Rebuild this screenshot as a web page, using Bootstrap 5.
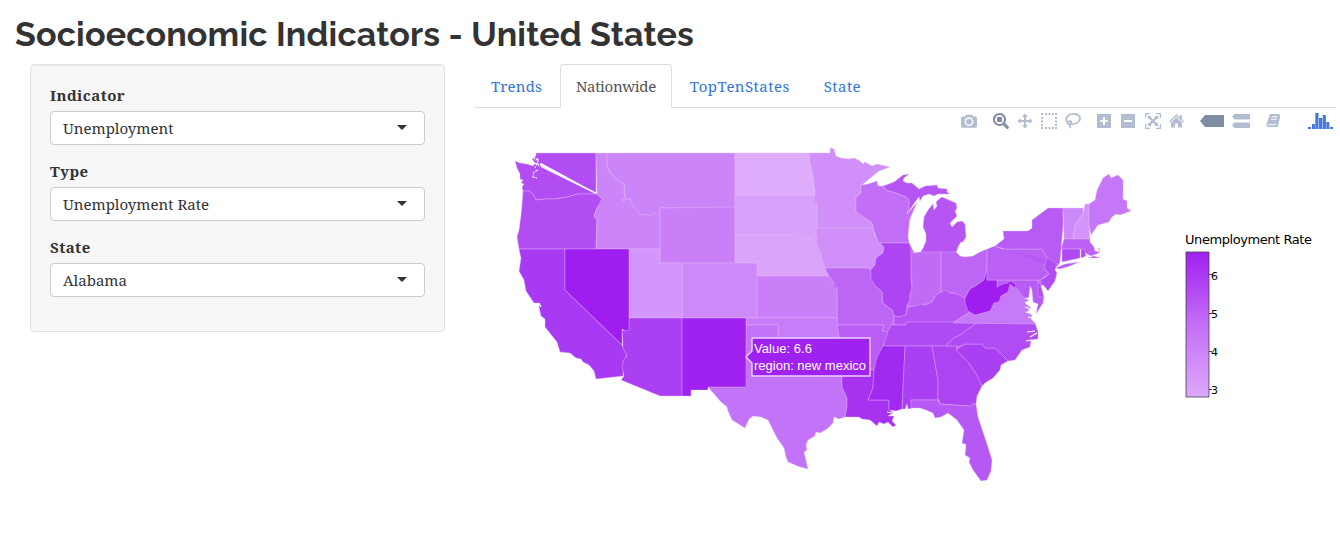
<!DOCTYPE html>
<html lang="en">
<head>
<meta charset="utf-8">
<meta name="viewport" content="width=device-width, initial-scale=1">
<title>Socioeconomic Indicators - United States</title>
<link href="https://cdn.jsdelivr.net/npm/bootstrap@5.3.0/dist/css/bootstrap.min.css" rel="stylesheet">
<style>
body{font-family:"Droid Serif","Noto Serif","DejaVu Serif Condensed","DejaVu Serif",serif;font-stretch:condensed;font-size:15px;line-height:22px;color:#333;background:#fff;overflow:hidden}
h1{font-family:Raleway,Lato,sans-serif;font-weight:700;font-size:34px;line-height:38px;letter-spacing:.16px;margin:0;padding:15px 0 0 15px;height:64px;white-space:nowrap}
.side-col{width:415px;margin-left:30px;margin-right:30px}
.side-panel{height:268px;background:#f7f7f7;border:1px solid #e3e3e3;border-radius:4px;padding:19px;box-shadow:inset 0 1px 1px rgba(0,0,0,.05)}
.field{margin-bottom:15px}
.field label{display:block;font-weight:700;letter-spacing:1px;height:22px;margin-bottom:5px}
.picker{height:34px;padding:0 17px 0 12px;background:#fff;border:1px solid #ccc;border-radius:4px;color:#333;font-size:15px;line-height:22px}
.picker::after{border-top:5px solid #333;border-left:5px solid transparent;border-right:5px solid transparent;margin:0 0 2px}
.main-col{width:861px}
.nav-tabs{height:44px;border-color:#ddd}
.nav-tabs .nav-link{color:#3475dc;padding:10px 15px;margin-right:2px;line-height:22px;height:44px;border-radius:4px 4px 0 0;letter-spacing:.17px}
.nav-tabs .nav-link.active{color:#555;border-color:#ddd #ddd #fff;letter-spacing:-.34px}
.nav-tabs .wide-name{letter-spacing:.45px}
.field label{letter-spacing:.45px}
.tools{height:22px;padding:5px 2px 0 0;color:#b3bdd1}
.tools svg{height:16px;width:16px;margin-right:8px;fill:currentColor;flex:none}
.tools .on{color:#808ca4}
.tools .sep{margin-right:16px}
.map{display:block;width:865px;height:400px}
.states path{stroke:#e5bdfb;stroke-opacity:.55;stroke-width:.7;stroke-linejoin:round}
.legend-text{font-family:Verdana,"DejaVu Sans",sans-serif;font-stretch:normal;font-size:13px;fill:#000}
.tip-text{font-family:"Liberation Sans",Arial,sans-serif;font-size:13px;fill:#fff}
</style>
</head>
<body>
<h1>Socioeconomic Indicators - United States</h1>
<div class="d-flex">
  <aside class="side-col flex-shrink-0">
    <form class="side-panel">
      <div class="field"><label>Indicator</label><button type="button" class="btn picker dropdown-toggle w-100 d-flex align-items-center justify-content-between">Unemployment</button></div>
      <div class="field"><label>Type</label><button type="button" class="btn picker dropdown-toggle w-100 d-flex align-items-center justify-content-between">Unemployment Rate</button></div>
      <div class="field"><label>State</label><button type="button" class="btn picker dropdown-toggle w-100 d-flex align-items-center justify-content-between">Alabama</button></div>
    </form>
  </aside>
  <main class="main-col flex-shrink-0">
    <ul class="nav nav-tabs flex-nowrap">
      <li class="nav-item"><a class="nav-link" href="#">Trends</a></li>
      <li class="nav-item"><a class="nav-link active" href="#">Nationwide</a></li>
      <li class="nav-item"><a class="nav-link wide-name" href="#">TopTenStates</a></li>
      <li class="nav-item"><a class="nav-link wide-name" href="#">State</a></li>
    </ul>
    <div class="tools d-flex justify-content-end">
      <svg class="sep" viewBox="0 0 16 16"><path fill-rule="evenodd" d="M0 5q0-1.600 1.600-1.600H4l1-1.600h6l1 1.600h2.400Q16 3.400 16 5v8q0 1.700-1.600 1.700H1.600Q0 14.700 0 13ZM8 4.300a4.400 4.400 0 1 0 0 8.800 4.400 4.400 0 0 0 0-8.800Zm0 1.500a2.900 2.900 0 1 1 0 5.800 2.900 2.900 0 0 1 0-5.800Z"/><circle cx="8" cy="8.700" r="1.500"/></svg>
      <svg class="on" viewBox="0 0 16 16"><path fill-rule="evenodd" d="M6.500 0a6.500 6.500 0 1 0 3.400 12l3.300 3.500q1.200 1 2.200 0 1-1.200 0-2.200L12 10A6.500 6.500 0 0 0 6.500 0Zm0 2a4.500 4.500 0 1 1 0 9 4.500 4.500 0 0 1 0-9Z"/><path d="M4 4h5v5H4z"/></svg>
      <svg viewBox="0 0 16 16"><path d="M8 .500 11 4H9v3h3.500V5.200L15.700 8l-3.200 2.800V9H9v3.200h2L8 15.500 5 12.200h2V9H3.500v1.800L.3 8l3.200-2.800V7H7V4H5Z"/></svg>
      <svg viewBox="0 0 16 16"><path d="M0 0h2v2H0zM4 0h2v2H4zM7.500 0h2v2h-2zM11 0h2v2h-2zM14 0h2v2h-2zM0 4h2v2H0zM0 7.500h2v2H0zM0 11h2v2H0zM0 14h2v2H0zM4 14h2v2H4zM7.500 14h2v2h-2zM11 14h2v2h-2zM14 14h2v2h-2zM14 4h2v2h-2zM14 7.500h2v2h-2zM14 11h2v2h-2z"/></svg>
      <svg class="sep" viewBox="0 0 16 16"><path fill="none" stroke="currentColor" stroke-width="1.700" d="M3.300 10.800C.5 8.500.3 4.700 3.200 2.500 6.500 0 12 .500 14.300 3.300c2.300 3.500-1.500 7.200-6 7.700-1.500.2-2.500 0-3.600-.4m0 0C7 9.800 6.700 8 4.800 8.100 2.500 8.300 2.300 11 4.300 12c1.200.9 1.400 1.900.7 3"/></svg>
      <svg viewBox="0 0 16 16"><path fill-rule="evenodd" d="M0 1h14v14H0ZM6 4v3H3v2h3v3h2V9h3V7H8V4Z"/></svg>
      <svg viewBox="0 0 16 16"><path fill-rule="evenodd" d="M0 1h14v14H0ZM3 7v2h8V7Z"/></svg>
      <svg viewBox="0 0 16 16"><path d="M0 0h5v1.300H1.300V5H0ZM11 0h5v5h-1.300V1.300H11ZM0 11h1.300v3.700H5V16H0ZM14.700 11H16v5h-5v-1.300h3.700ZM3 3h3.500L5.700 4 8 6.500 10.300 4l-.8-1H13v3.500l-1-.8L9.500 8l2.500 2.300 1-.8V13H9.500l.8-1L8 9.500 5.700 12l.8 1H3V9.500l1 .8L6.500 8 4 5.700l-1 .8Z"/></svg>
      <svg viewBox="0 0 16 16" style="margin-right:15px"><path d="M7.500 1.200 11 4.500V2.200h2v4.200l2.300 2.200-1 1L7.500 3.300.8 9.600-.1 8.600ZM2 9.500l5.500-5.200L13 9.500V14.500H9v-4H6v4H2Z"/></svg>
      <svg class="on" viewBox="0 0 24 16" style="width:24px"><path d="M0 8 5 2h19v12H5Z"/></svg>
      <svg class="sep" viewBox="0 0 18 16" style="width:18px"><path d="M0 3.500 2.500 1H18v5.500H2.500ZM0 12l2.500-2.500H18V15H2.500Z"/></svg>
      <svg viewBox="0 0 16 16" style="margin-right:26px"><path fill-rule="evenodd" d="M4 1h9l1.300 2-2.500 11H1.500L.3 12Zm1.700 2.200-.3 1h6L11.700 3.200ZM5 5.700l-.3 1h6L11 5.700ZM2 11.300v1h8.300l.3-1Z"/></svg>
      <svg viewBox="0 0 26 16" style="width:26px;margin-right:0;color:#447adb"><path d="M0 14h3v2H0zM4 11h3v5H4zM7.300 0h3.200v16H7.300zM11 5h3.200v11H11zM14.700 2h3.200v14h-3.200zM18.300 9h3v7h-3zM22 14h3v2h-3z"/></svg>
    </div>
    <svg class="map" viewBox="475 130 865 400">
      <defs><linearGradient id="rate" x2="0" y2="1"><stop stop-color="#a020f0"/><stop offset=".5" stop-color="#c46ff7"/><stop offset="1" stop-color="#dda8fa"/></linearGradient></defs>
      <path fill="#bb65f5" d="M600 200H855L870 240H908L915 255H950L962 265 985 255 1040 260 1045 285 1000 290 1020 320 1020 340 990 370 970 400 850 400 700 370 650 350Z"/>
      <g class="states">
        <path fill="#b24df3" d="M515 161 520 163 527 164 533 166 535 163 532 159 536 156 536 153H596V193L541 163 541 167 596 194H578L567 197 561 198 555 199 545 199 536 200 533 194 529 191H523L522 187 524 184 521 183 523 180 520 179V174L517 168Z"/>
        <path fill="#b24df3" d="M523 191H529L533 194 536 200 545 199 555 199 561 198 567 197 578 194H597L602 199 601 203 597 208 594 216 597 220 596 249H519L518 243 517 237 519 230 521 215 522 204Z"/>
        <path fill="#cc85f9" d="M596 153H607V167L612 175 618 180 625 185 624 192 625 196 623 201 627 199 630 199 633 206 637 210 640 215 645 214 649 215 656 213 660 214V249H596L597 220 594 216 597 208 602 199 597 194Z"/>
        <path fill="#cc85f9" d="M607 153H735V208H660V214L657 211 654 214 649 215 645 214 640 215 637 210 633 206 630 199 627 199 623 201 625 196 624 192 625 185 618 180 612 175 607 167Z"/>
        <path fill="#ca7ff8" d="M660 208 735 207V263H660Z"/>
        <path fill="#dfabfb" d="M735 153H809L810 164 813 176 814 189 815 195H735Z"/>
        <path fill="#d9a1fa" d="M735 195H815L813 200 817 204V228L816 232 817 238 816 242 811 238 805 237 800 238 795 235H735Z"/>
        <path fill="#dba4fa" d="M735 235H795L800 238 805 237 811 238 816 242 821 253 823 262 826 270 829 276H757V263H735Z"/>
        <path fill="#d08ff9" d="M809 153H830V148L834 149 836 156 841 158 849 159 854 158 860 161 863 164 865 162 872 166 877 164 890 167 879 171 863 184 861 185V193L856 197V211L862 216 872 223 873 228H817V204L813 200 815 195 813 176 810 164Z"/>
        <path fill="#d08ff9" d="M817 228H873L875 236 880 243 884 247 883 253 876 258 875 265 871 270 868 268H825L823 260 821 253 816 242 817 238 816 232Z"/>
        <path fill="#c26ef6" d="M861 185 868 184 877 181 878 186 883 186 886 190 896 193 906 197 909 200V207L907 214 913 207 917 203 912 214 910 219 909 226 908 236 909 243H879L876 237 875 234 873 228 872 223 862 216 856 211V197L861 193Z"/>
        <path fill="#b755f4" d="M883 186 894 182 903 175 909 174 904 178 903 181 907 183 912 183 919 189 925 186 937 185 938 188 947 189 947 192 950 194 938 194 934 196 929 194 923 196 920 201 919 197 915 202 911 208 907 214 909 207 909 200 906 197 896 193 886 190Z"/>
        <path fill="#b755f4" d="M942 197 956 203 957 208 955 211 957 216 950 223 952 227 957 222 962 221 965 224 966 237 963 242 961 242 958 247 956 253H920L923 248 926 241 926 234 923 227 924 217 928 210 933 204 934 210 937 206 936 202 939 199Z"/>
        <path fill="#ae45f3" d="M880 243H909L911 250V280L912 288 910 295 910 301 907 305 906 315 899 317 894 316 892 310 883 303 882 292 874 285 870 278V271L875 265 876 258 883 253 884 247Z"/>
        <path fill="#c16af6" d="M911 253 920 252H941V292L936 295 932 302 925 304 915 306 907 307 910 301 910 295 912 288Z"/>
        <path fill="#bd65f5" d="M941 252H956L960 256 965 257 973 256 980 252 987 249V268L984 280 977 285 970 289 965 298 960 297 954 293H946L941 292Z"/>
        <path fill="#bd65f5" d="M825 268H868L871 271V279L875 286 882 292 882 303 892 310 894 316 893 324 891 325 888 332H882L884 325H837V289L834 283 830 278Z"/>
        <path fill="#b755f4" d="M894 316 899 317 906 315 908 307 915 306 921 304 926 305 932 302 936 295 941 292 945 290 950 293 957 294 965 298 966 305 971 311 964 315 953 323H906V325H894Z"/>
        <path fill="#b04bf3" d="M891 325H906V322H975L974 325 968 329 962 334 954 338 948 343 947 346H883L885 337Z"/>
        <path fill="#ca7ff8" d="M757 276H829L834 283 832 286 837 290V318H757Z"/>
        <path fill="#cc89f7" d="M682 263H757V318H682Z"/>
        <path fill="#d396fa" d="M629 249H660V263H682V318H629Z"/>
        <path fill="#a83af3" d="M519 249H565V290L622 345 627 355 623 362 623 376 596 379 594 371 589 365 583 362 581 359 576 358 570 353 560 352 557 342 545 327V319L541 316 539 307 540 303 534 303 532 300 526 291 524 280 519 271 521 258Z"/>
        <path fill="#aa40f2" d="M629 318H682V396H660L621 380 624 376 622 366 624 359 627 356 623 348 622 330 626 331 629 327Z"/>
        <path fill="#9f1eef" d="M565 249H629V330L625 331 622 329V345L565 290Z"/>
        <path fill="#c87cf8" d="M746 318H837L839 340 843 355V380H778V325H746Z"/>
        <path fill="#b95df5" d="M837 325H884L882 331 888 332 883 346 879 355 874 370H841V345Z"/>
        <path fill="#c373f7" d="M746 325H778V360L842 370V387L847 398 847 406 845 417 839 419 834 417 833 423 827 429 820 433 816 432 815 436 808 440 806 445 807 450 804 452 808 469 800 467 788 462 786 457 784 448 777 438 768 420 761 417 753 416 749 419 745 428 732 420 728 411 727 407 721 402 708 387H745Z"/>
        <path fill="#a022f0" d="M682 318H746V387H708V390H691V396H682Z"/>
        <path fill="#a733f1" d="M842 370H874L873 388 868 400H889V409L893 413 888 416 894 416 892 421 896 425 893 427 888 422 884 424 879 422 877 426 870 420 862 419 859 417 845 417 847 406 847 398 842 387Z"/>
        <path fill="#a02af0" d="M883 346H905L902 409 896 411 889 410V400H868L873 388 874 370 877 357Z"/>
        <path fill="#ab40f2" d="M905 346H932L938 380V400H911L913 408 908 409 907 404 905 409H902Z"/>
        <path fill="#ae43f2" d="M932 346H958L956 350 968 362 977 375 982 386 977 396 976 404H972L970 408 969 406 940 404 938 398V380Z"/>
        <path fill="#b658f4" d="M911 400H938L940 404 969 406 970 407 972 404H976L978 417 983 432 987 444 992 460 991 471 987 480 981 481 973 470 969 462 970 458 965 455 966 446 964 444 962 443 964 430 957 420 948 413 941 417 935 418 933 413 926 410 920 408 911 408Z"/>
        <path fill="#ab3ff2" d="M956 350 965 344H982L985 348H995L1008 361 1001 365 1000 370 993 378 985 383 982 386 979 380 977 375 968 362Z"/>
        <path fill="#b04cf3" d="M975 323H1035L1038 332 1038 339 1031 340 1030 347 1022 350 1015 360 1008 361 995 348H985L982 344H965L956 348 958 346H947L948 343 954 338 962 334 968 329 974 325Z"/>
        <path fill="#c77af8" d="M953 323 971 312 975 315 988 311 992 303 1001 294 1010 283 1018 288 1022 293 1024 298 1029 300 1025 303 1031 308 1027 312 1032 315 1031 319 1036 324Z"/>
        <path fill="#b85af4" d="M997 280H1038L1043 297 1044 297 1043 303 1036 314 1038 304 1033 302 1032 290 1030 286 1029 298 1024 298 1017 289 1013 283 1007 283 997 289Z"/>
        <path fill="#b14ef3" d="M1038 280 1041 286 1044 297H1038Z"/>
        <path fill="#9f1eef" d="M987 268V280H997V287L1003 284 1007 283 1011 281 1016 285 1015 288 1010 284 1008 292 1001 296 999 302 994 303 990 311 975 315 968 311 965 303V298L970 289 977 285 984 280Z"/>
        <path fill="#bb60f5" d="M987 249 995 246 1003 249H1042L1047 256 1048 265 1044 268 1049 274 1040 280H987Z"/>
        <path fill="#b85af4" d="M995 246 1004 239 1003 231H1019L1028 231 1032 228V220L1040 214 1048 208H1063V226L1061 250 1060 262 1057 267 1047 258 1042 249H1004Z"/>
        <path fill="#b658f4" style="stroke:none" d="M1004 249.500 1048 265 1046 259Z"/>
        <path fill="#b14ef3" d="M1047 257 1057 264 1055 270 1057 273 1055 281 1048 291 1044 286 1040 281 1049 274 1044 268Z"/>
        <path fill="#cc89f8" d="M1063 208H1083V214L1075 225 1073 239H1064Z"/>
        <path fill="#d395f9" d="M1083 214 1085 204 1089 204V225L1090 239H1073L1075 225Z"/>
        <path fill="#c577f7" d="M1089 204 1095 200 1097 190 1103 178 1109 174 1111 178 1118 175 1123 180V199L1127 201V208L1131 211 1120 215 1116 214 1112 217 1109 222 1098 225 1091 235 1089 225Z"/>
        <path fill="#bc61f5" d="M1064 239H1090L1090 242 1094 247 1095 251 1099 252 1099 248 1097 248 1100 249 1099 253 1091 256 1085 253 1080 249H1061Z"/>
        <path fill="#b04af3" d="M1062 249H1080V258L1062 262Z"/>
        <path fill="#b04bf3" d="M1081 249H1084L1086 256 1081 258Z"/>
        <path fill="#b85af4" d="M1056 268 1065 264 1079 262 1070 266 1060 269ZM1088 258 1094 256 1100 258 1093 258Z"/>
      </g>
      <g fill="none" stroke="#fff" stroke-width="1.100">
        <path d="M533 157 536 160 538 158 538 164 540 167M538 170 534 172 533 177 537 178M533 164 537 163 535 168" stroke-dasharray="3 1"/>
        <path d="M540 164.500 596 193" stroke-width=".8"/>
        <path d="M540 164 568 179" stroke-width="1.500"/>
        <path d="M1025 302 1031 304M1025 307 1032 310M1026 312 1033 314M1028 317 1034 318M1027 332 1035 331M1030 337 1037 333M1026 341 1032 340M1031 289 1029 298M539 303 541 307M815 435 819 434M887 412 892 413M964 444 966 445"/>
      </g>
      <path d="M746 357 752 351V338H870V376H752V363Z" fill="#a022f0" stroke="#ecd2fd" stroke-width="1.400"/>
      <text class="tip-text" x="754" y="353" textLength="58">Value: 6.6</text>
      <text class="tip-text" x="754" y="370" textLength="112">region: new mexico</text>
      <text class="legend-text" x="1185" y="244" textLength="127">Unemployment Rate</text>
      <path d="M1186 252H1209V397H1186Z" fill="url(#rate)" stroke="#444" stroke-opacity=".8"/>
      <path d="M1209 274.500H1212M1209 313.500H1212M1209 351.500H1212M1209 389.500H1212" stroke="#444"/>
      <g class="legend-text" style="font-size:11px"><text x="1211" y="280">6</text><text x="1211" y="318">5</text><text x="1211" y="356">4</text><text x="1211" y="394">3</text></g>
    </svg>
  </main>
</div>
<script src="https://cdn.jsdelivr.net/npm/bootstrap@5.3.0/dist/js/bootstrap.bundle.min.js"></script>
</body>
</html>
